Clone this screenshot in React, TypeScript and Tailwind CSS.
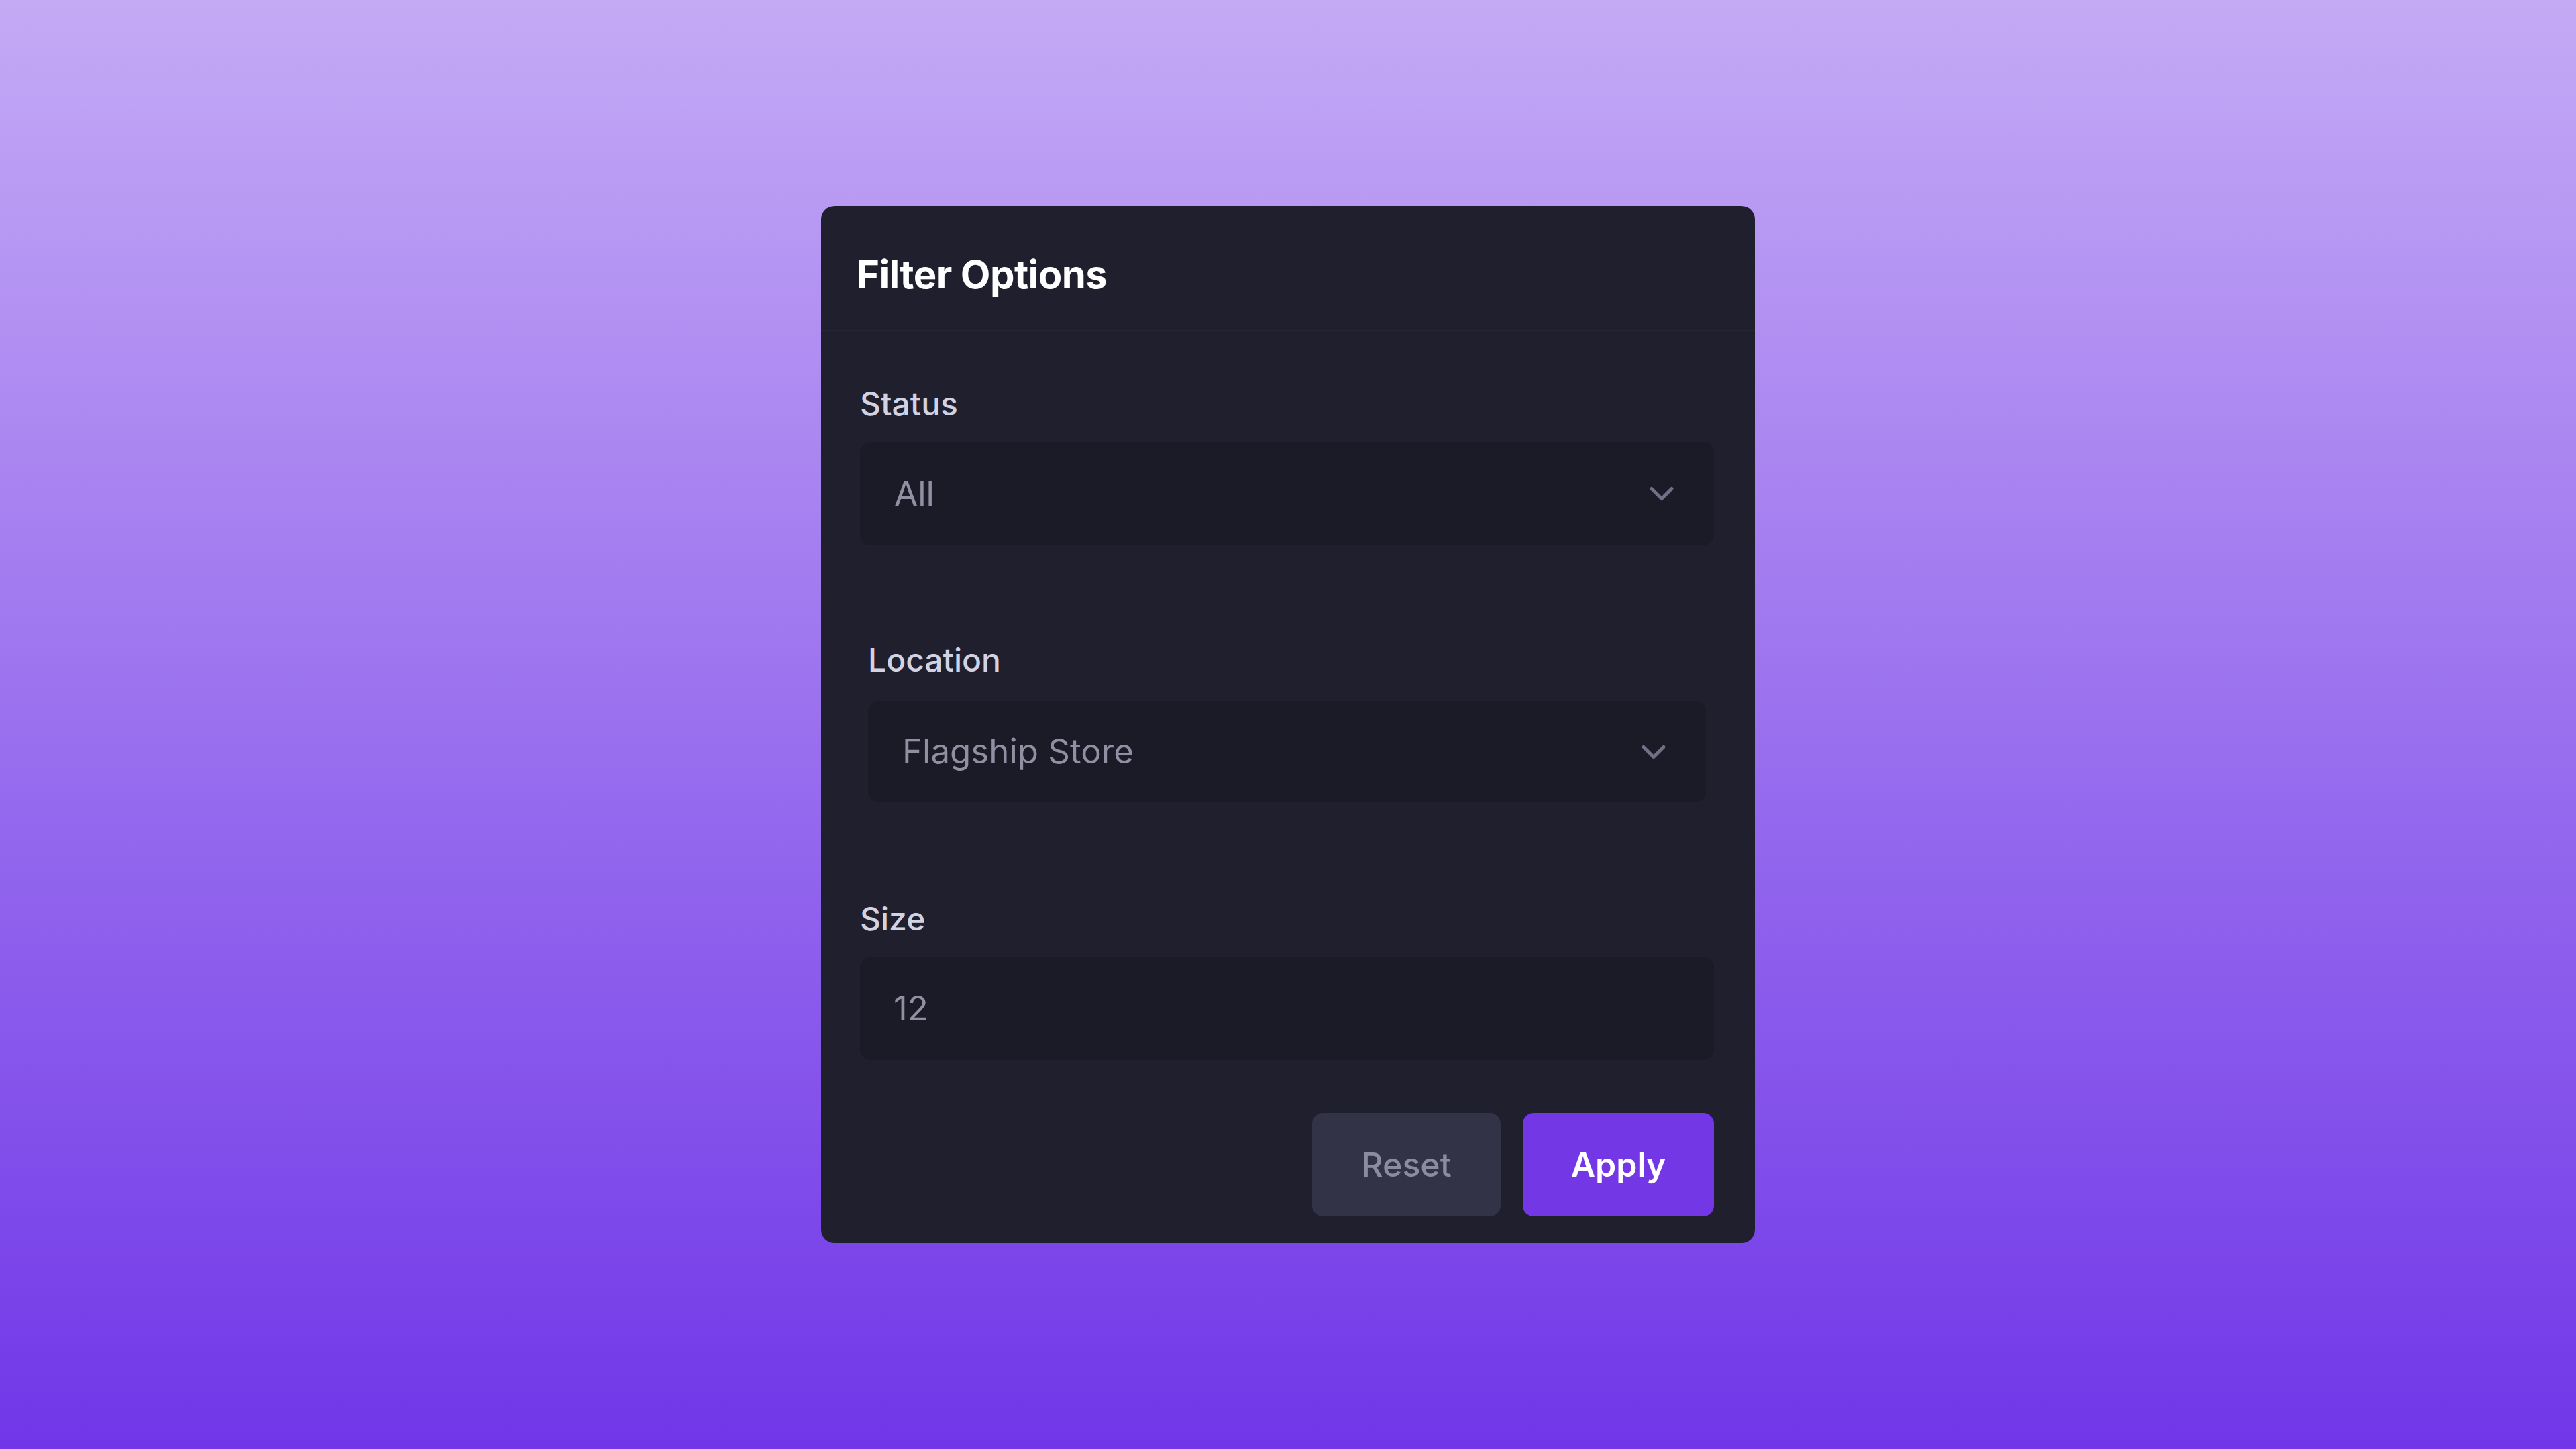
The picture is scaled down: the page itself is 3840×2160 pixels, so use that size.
import React from "react";

function Chevron() {
  return (
    <svg
      width="60"
      height="60"
      viewBox="0 0 24 24"
      fill="none"
      stroke="#707086"
      strokeWidth="2"
      strokeLinecap="round"
      strokeLinejoin="round"
      className="shrink-0"
    >
      <path d="m6 9 6 6 6-6" />
    </svg>
  );
}

function Label({ children }: { children: React.ReactNode }) {
  return (
    <div className="text-[48px] leading-[72px] font-medium text-[#d3d2e2]">
      {children}
    </div>
  );
}

export default function App() {
  return (
    <div
      className="w-full h-screen flex items-center justify-center bg-[linear-gradient(to_bottom,#c4aaf5,#7036e8)]"
      style={{ fontFamily: "Inter, 'Noto Sans', sans-serif" }}
    >
      <div className="w-[1392px] rounded-[20px] bg-[#1f1f2d] flex flex-col">
        <div className="pt-[73px] pb-[54px] pl-[53px] pr-12 border-b border-[#262636]">
          <h2 className="text-[58px] leading-[58px] font-bold tracking-[-0.01em] text-white">
            Filter Options
          </h2>
        </div>
        <div className="pl-[58px] pr-[61px] pb-[40px] flex flex-col">
          <div className="mt-[73px]">
            <Label>Status</Label>
            <div className="mt-[21px] h-[154px] rounded-[16px] bg-[#1b1b28] flex items-center justify-between pl-[51px] pr-[48px]">
              <span className="text-[51px] text-[#9090a2]">All</span>
              <Chevron />
            </div>
          </div>

          <div className="mt-[123px] p-[12px]">
            <Label>Location</Label>
            <div className="mt-[25px] h-[151px] rounded-[16px] bg-[#1b1b28] flex items-center justify-between pl-[51px] pr-[48px]">
              <span className="text-[51px] text-[#9090a2]">Flagship Store</span>
              <Chevron />
            </div>
          </div>

          <div className="mt-[126px]">
            <Label>Size</Label>
            <div className="mt-[21px] h-[153px] rounded-[16px] bg-[#1b1b28] flex items-center pl-[50px]">
              <span className="text-[51px] text-[#9090a2]">12</span>
            </div>
          </div>

          <div className="mt-[79px] flex justify-end gap-[33px]">
            <button className="w-[281px] h-[154px] rounded-[16px] bg-[#333347] text-[50px] font-medium text-[#8c8ca0] flex items-center justify-center">
              Reset
            </button>
            <button className="w-[285px] h-[154px] rounded-[16px] bg-[#7337e6] text-[50px] font-semibold text-white flex items-center justify-center">
              Apply
            </button>
          </div>
        </div>
      </div>
    </div>
  );
}
